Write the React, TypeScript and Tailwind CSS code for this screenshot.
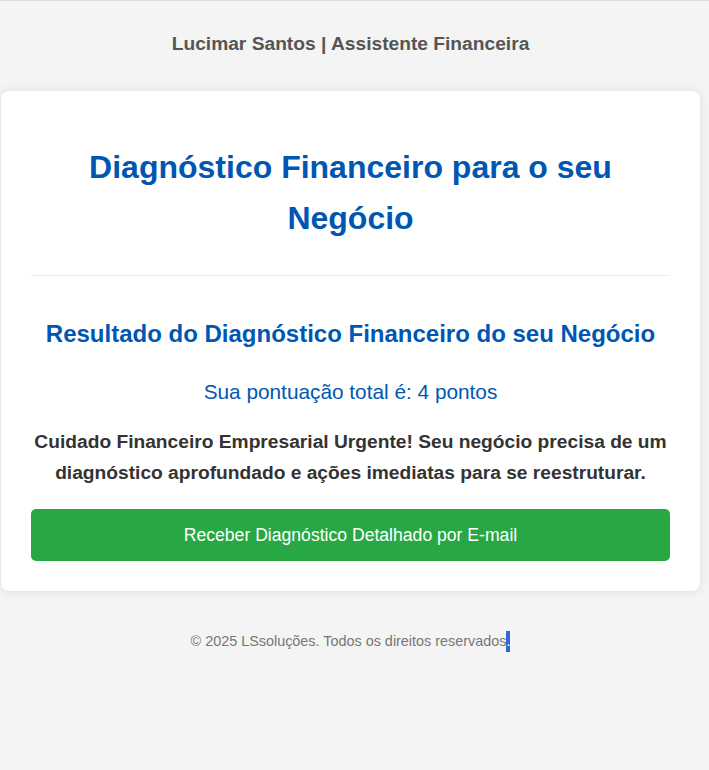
export default function App() {
  return (
    <div className="min-h-[770px] bg-[#f4f4f4] border-t border-[#dddddd] font-['Liberation_Sans',Arial,sans-serif]">
      <div className="ml-px w-[699px]">
        <header className="pt-[29px] pb-[33px] text-center">
          <p className="text-[19.2px] leading-[28px] font-bold text-[#555555]">Lucimar Santos | Assistente Financeira</p>
        </header>

        <main className="bg-white rounded-lg shadow-[0_0_10px_rgba(0,0,0,0.1)] px-[30px] pt-[30px] pb-[30px]">
          <div className="border-b border-[#eeeeee] pb-[31px]">
            <h1 className="mt-[21px] px-[40px] text-center text-[32px] leading-[51px] font-bold text-[#0056b3]">
              Diagnóstico Financeiro para o seu Negócio
            </h1>
          </div>

          <section className="text-center">
            <h2 className="mt-[39px] text-[24px] leading-[38px] font-bold text-[#0056b3]">
              Resultado do Diagnóstico Financeiro do seu Negócio
            </h2>
            <p className="mt-[23px] text-[20.8px] leading-[32px] text-[#0056b3]">Sua pontuação total é: 4 pontos</p>
            <p className="mt-[18px] text-[19.2px] leading-[31px] font-bold text-[#333333]">
              Cuidado Financeiro Empresarial Urgente! Seu negócio precisa de um diagnóstico aprofundado e ações imediatas para se reestruturar.
            </p>
            <button className="mt-[21px] w-full h-[52px] rounded-[5px] bg-[#28a745] text-white text-[17.6px]">
              Receber Diagnóstico Detalhado por E-mail
            </button>
          </section>
        </main>

        <footer className="mt-[40px] text-center text-[14.4px] leading-[21px] text-[#777777]">
          © 2025 LSsoluções. Todos os direitos reservados<span className="inline-block h-[21px] align-top bg-[#3367d6] text-white">.</span>
        </footer>
      </div>
    </div>
  )
}
